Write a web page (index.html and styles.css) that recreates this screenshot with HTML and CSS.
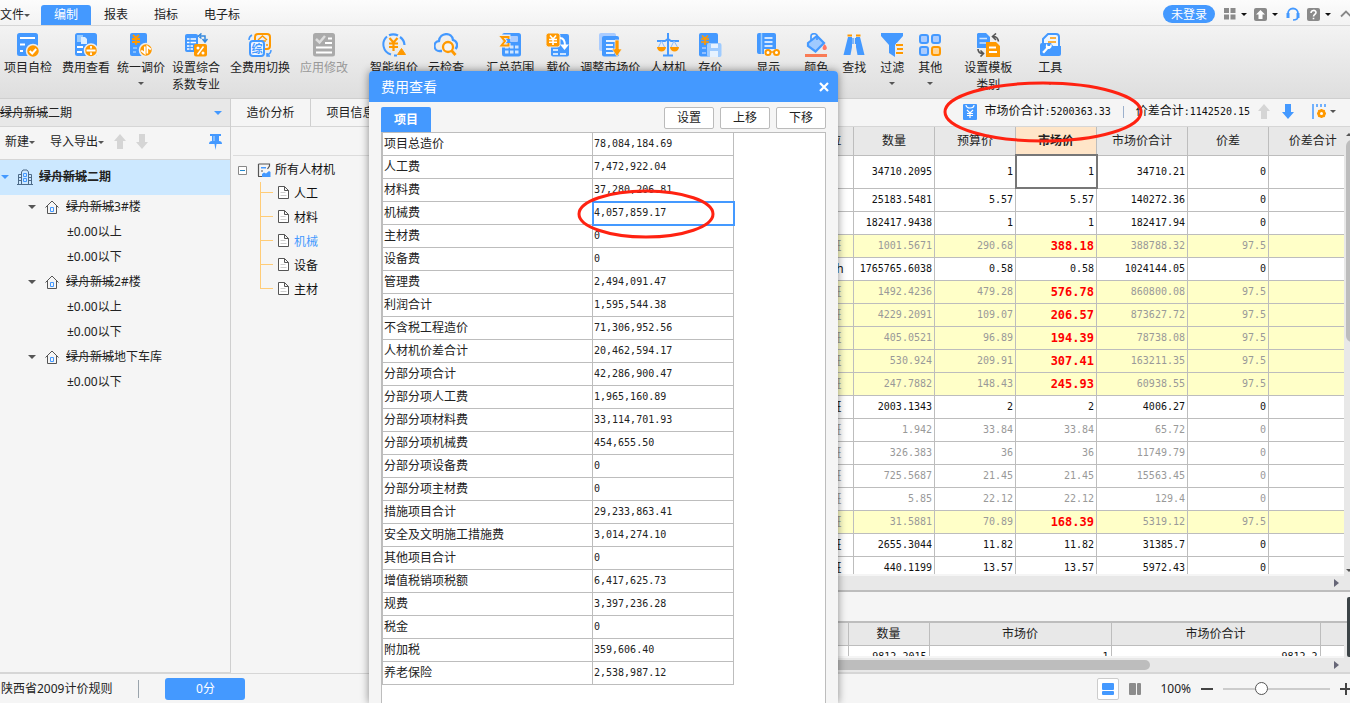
FILE: index.html
```html
<!DOCTYPE html>
<html lang="zh-CN">
<head>
<meta charset="utf-8">
<title>费用查看</title>
<link rel="stylesheet" href="styles.css">
</head>
<body>
<div class="app">
<header class="topbar">
  <nav class="menu">
    <button class="menu-item file">文件<i class="caret tiny"></i></button>
    <button class="menu-item active">编制</button>
    <button class="menu-item">报表</button>
    <button class="menu-item">指标</button>
    <button class="menu-item">电子标</button>
  </nav>
  <div class="account">
    <button class="login">未登录</button>
    <button class="tool" aria-label="布局"><svg width="12" height="12" viewBox="0 0 12 12" fill="#8a8a8a"><path d="M0 0h5v5H0zM6.500 0h5v5h-5zM0 6.500h5v5H0zM6.500 6.500h5v5h-5z"/></svg><i class="caret dark"></i></button>
    <button class="tool" aria-label="升级"><svg width="13" height="13" viewBox="0 0 13 13"><rect width="13" height="13" rx="2" fill="#8a8a8a"/><path d="M6.500 2L11 6.500H8.500V11h-4V6.500H2z" fill="#fff"/></svg><i class="caret dark"></i></button>
    <button class="tool headset" aria-label="客服"><svg width="14" height="14" viewBox="0 0 14 14" fill="none" stroke="#49f"><path d="M2 7.500v-1a5 5 0 0 1 10 0v1" stroke-width="1.800"/><path d="M2 6v5M12 6v5" stroke-width="3"/><path d="M12 9.500c0 2.500-2 3.500-5 3.500" stroke-width="1.500"/></svg></button>
    <button class="tool" aria-label="帮助"><svg width="13" height="13" viewBox="0 0 13 13"><rect width="13" height="13" rx="2" fill="#8a8a8a"/><path d="M4 5c0-3.500 5-3.200 5-.5C9 6.500 6.600 6.300 6.500 8.500M6.500 9.700v1.600" fill="none" stroke="#fff" stroke-width="1.600"/></svg><i class="caret dark"></i></button>
    <button class="tool collapse" aria-label="收起"><svg width="12" height="8" viewBox="0 0 12 8" fill="none" stroke="#888" stroke-width="1.800"><path d="M1 6.500L6 1.500l5 5"/></svg></button>
  </div>
</header>

<div class="ribbon">
  <button class="cmd m"><svg viewBox="0 0 24 24"><rect x="1" y="0" width="21" height="23" rx="2.500" fill="#49f"/><path d="M4 5h15M4 11.500h5M4 18h3" stroke="#fff" stroke-width="2"/><circle cx="17" cy="18" r="6.500" fill="#f90" stroke="#eee" stroke-width="1.500"/><path d="M13.700 18l2.500 2.500 4-4.500" fill="none" stroke="#fff" stroke-width="2"/></svg><span>项目自检</span></button>
  <button class="cmd s"><svg viewBox="0 0 24 24"><rect x="1" y="0" width="22" height="23" rx="2.500" fill="#49f"/><path d="M3 2h6v7H3z" fill="#9cf"/><path d="M7 4h4l2 2v5H7z" fill="#def"/><path d="M3 14h6M3 19h5" stroke="#fff" stroke-width="2"/><circle cx="17" cy="17.500" r="6.500" fill="#f90" stroke="#eee" stroke-width="1.500"/><path d="M12.500 17.500h9M17 13v2.500M17 19.500V22" stroke="#fff" stroke-width="1.800"/></svg><span>费用查看</span></button>
  <button class="cmd s"><svg viewBox="0 0 24 24"><rect x="1" y="0" width="17" height="23" rx="2" fill="#49f"/><path d="M4 2l3 3 3-3M3 6h8M3 9h8M7 5v7" fill="none" stroke="#f90" stroke-width="1.800"/><path d="M4 15h4M4 19h3" stroke="#9cf" stroke-width="1.500"/><circle cx="17" cy="17" r="6.500" fill="#f90" stroke="#eee" stroke-width="1.500"/><path d="M15.800 13.500v7L12.300 17.500M18.300 20.500v-7l3.500 3" fill="none" stroke="#fff" stroke-width="1.700"/></svg><span>统一调价</span><i class="caret"></i></button>
  <button class="cmd m"><svg viewBox="0 0 24 24"><rect x="1" y="1" width="13" height="18" rx="2" fill="#49f"/><path d="M3 6h9M3 9.500h9M3 13h6M3 16h6" stroke="#fff" stroke-width="1.700"/><path d="M6 5v13" stroke="#49f"/><path d="M16 3h5v5M17.500 0.500l-3 2.500 3 2.500M18.500 6l2.500 3 2.500-3" fill="none" stroke="#38d" stroke-width="1.500"/><rect x="10" y="11" width="13" height="12.500" rx="2" fill="#f90"/><path d="M19.500 13.500l-6 8" stroke="#fff" stroke-width="1.500"/><circle cx="14" cy="15" r="1.500" fill="#fff"/><circle cx="19" cy="20" r="1.500" fill="#fff"/></svg><span>设置综合<br>系数专业</span></button>
  <button class="cmd m"><svg viewBox="0 0 24 24"><rect x="7" y="1" width="15" height="15" rx="3" fill="none" stroke="#f90" stroke-width="2"/><path d="M10 7l4.500-4L19 7M11 8h7M18 12h2" fill="none" stroke="#f90" stroke-width="1.500"/><rect x="2" y="8" width="14" height="15" rx="3" fill="#f1f7ff" stroke="#49f" stroke-width="2"/><text x="9" y="20" font-size="11" font-weight="700" text-anchor="middle" fill="#49f">综</text><path d="M1 7c0-3 1-4 3-5M23 17c0 3-1 4-4 5M19 20v3h3" stroke="#49f" stroke-width="1.500" fill="none"/></svg><span>全费用切换</span></button>
  <button class="cmd l" disabled><svg viewBox="0 0 24 24"><rect x="1" y="0" width="22" height="23.500" rx="2.500" fill="#aaa"/><path d="M4 6l3.500 3.500L13 3" fill="none" stroke="#ddd" stroke-width="2.500"/><path d="M16 5.500h4M13 10h7M4 14.500h16M4 19.500h16" stroke="#fff" stroke-width="2"/></svg><span>应用修改</span></button>
  <button class="cmd m"><svg viewBox="0 0 24 24"><path d="M9 21.500A10.500 10.500 0 0 1 5 3.500" fill="none" stroke="#49f" stroke-width="2"/><path d="M7 2.200A10.500 10.500 0 0 1 16 2.500M18 4a10.500 10.500 0 0 1 4.500 8M12 22.500h3" fill="none" stroke="#49f" stroke-width="2.200"/><path d="M7.500 5l4 4.500 4-4.500M7 10.500h9M7 14h9M11.500 9v9" fill="none" stroke="#f90" stroke-width="2.200"/><path d="M19.500 15.500l4 6h-8z" fill="#f90" stroke="#f90" stroke-linejoin="round"/></svg><span>智能组价</span></button>
  <button class="cmd l"><svg viewBox="0 0 24 24"><path d="M8 18H6A5 5 0 0 1 5 8C6-1 18-1 19 7c4 1 5.500 5.500 2.500 9" fill="none" stroke="#49f" stroke-width="2.300"/><circle cx="14" cy="14" r="5" fill="#f5f5f5" stroke="#f90" stroke-width="2.300"/><path d="M17.500 17.500L21.500 22" stroke="#f90" stroke-width="2.800"/></svg><span>云检查</span></button>
  <button class="cmd n"><svg viewBox="0 0 24 24"><rect x="4" y="0" width="19" height="23.500" rx="2.500" fill="#49f"/><rect x="12" y="3" width="8" height="6" rx="1" fill="#acf"/><path d="M7 12.500h3.500v3H7zM12 12.500h3.500v3H12zM17 12.500h3.500v3H17zM7 17.500h3.500v3H7zM12 17.500h3.500v3H12zM17 17.500h3.500v3H17z" fill="#cfe5ff"/><path d="M10.500 6V3.500H3.500L7 8l-3.500 4.500h7V10" fill="none" stroke="#eee" stroke-width="4"/><path d="M10.500 6V4H3.500L7 8l-3.500 4.500h7V10" fill="none" stroke="#f90" stroke-width="2"/></svg><span>汇总范围</span></button>
  <button class="cmd m"><svg viewBox="0 0 24 24"><rect x="5" y="1" width="18" height="22.500" rx="2" fill="#49f"/><rect x="0" y="0" width="14" height="14" rx="2.500" fill="#f90" stroke="#eee"/><path d="M4 2.500L7 6l3-3.500M3 6.500h8M3 9.200h8M7 6v6" fill="none" stroke="#fff" stroke-width="1.600"/><path d="M14 5c4 0 5 3 5 8" fill="none" stroke="#fff" stroke-width="2"/><path d="M14 11.500h9L18.500 17z" fill="#fff"/><path d="M7 17h5M7 21h5M14 21h6" stroke="#cfe5ff" stroke-width="2"/></svg><span>载价</span></button>
  <button class="cmd m"><svg viewBox="0 0 24 24"><rect x="1" y="0" width="17" height="18" rx="2" fill="#acf"/><rect x="4" y="3" width="17" height="20.500" rx="2" fill="#49f"/><path d="M8 8h9M8 12h7M8 16h7M8 20h8" stroke="#e6f2ff" stroke-width="2"/><path d="M17 7h4v9h3l-5 7.500-5-7.500h3z" fill="#f90" stroke="#eee" stroke-width=".7"/></svg><span>调整市场价</span></button>
  <button class="cmd n"><svg viewBox="0 0 24 24"><path d="M12 0v22M7 22.500h10M1 8h8l3-2 3 2h8" fill="none" stroke="#49f" stroke-width="2"/><path d="M5.500 8L2 15M5.500 8L9 15M18 8l-3.500 7M18 8l4 7" stroke="#8bf" stroke-width="1"/><path d="M1 14h9a4.500 4.500 0 0 1-9 0zM14 14h9a4.500 4.500 0 0 1-9 0z" fill="#f90"/></svg><span>人材机</span></button>
  <button class="cmd x"><svg viewBox="0 0 24 24"><rect x="1" y="0" width="19" height="23.500" rx="2" fill="#49f"/><path d="M4 2.500L7 5.500l3-3M3 6h8M3 9h8M7 5v7" fill="none" stroke="#f90" stroke-width="1.700"/><path d="M4 15h4M4 20h4" stroke="#acf" stroke-width="1.500"/><rect x="9" y="10" width="14.500" height="14" rx="2" fill="#9ecbff"/><path d="M13 11h7v4h-7zM12 18h8v6h-8z" fill="#e6f2ff"/></svg><span>存价</span></button>
  <button class="cmd w"><svg viewBox="0 0 24 24"><rect x="1" y="0" width="19" height="21" rx="2" fill="#49f"/><path d="M5.500 0v21" stroke="#9cf" stroke-width="1.500"/><path d="M8.500 5h8M8.500 9h8M8.500 13h8" stroke="#fff" stroke-width="1.700"/><path d="M8 16h17v8H8z" fill="#eee"/><circle cx="12" cy="19.500" r="2.500" fill="#fff" stroke="#f90" stroke-width="2"/><circle cx="20.500" cy="19.500" r="2.500" fill="#fff" stroke="#f90" stroke-width="2"/><path d="M14 19h4" stroke="#f90" stroke-width="1.500"/></svg><span>显示</span></button>
  <button class="cmd k"><svg viewBox="0 0 24 24"><path d="M4 10l9-7 7 7-8.500 8.500L4 13z" fill="#9fcaff" stroke="#49f" stroke-width="2.200"/><path d="M7 8V3c0-3 6-3 6 0v4" fill="none" stroke="#49f" stroke-width="1.700"/><path d="M20.500 11c4 4 2 6 0 6s-3-2 0-6z" fill="#f76"/><path d="M1 22.500h22" stroke="#f97b55" stroke-width="3"/></svg><span>颜色</span></button>
  <button class="cmd k"><svg viewBox="0 0 24 24"><path d="M6 4h4v10l-1.500 8H1.500zM14 4h4l4.500 18h-7L14 14z" fill="#49f"/><path d="M11 5v6M13.500 5v6" stroke="#49f" stroke-width="1.300"/><path d="M5.500 2.500H10M14 2.500h4.500" stroke="#f90" stroke-width="2"/></svg><span>查找</span></button>
  <button class="cmd k"><svg viewBox="0 0 24 24"><path d="M1 0h22v3l-8 9v12l-6-4v-8L1 3z" fill="#49f"/><path d="M16 12h7M17 16h6M16 20h7" stroke="#eee" stroke-width="4"/><path d="M16 12h7M17 16h6M16 20h7" stroke="#f90" stroke-width="2"/></svg><span>过滤</span><i class="caret"></i></button>
  <button class="cmd l"><svg viewBox="0 0 24 24"><g fill="#acf" stroke="#49f" stroke-width="2"><rect x="2" y="2" width="8" height="8" rx="2"/><rect x="14" y="2" width="8" height="8" rx="2"/><rect x="2" y="14" width="8" height="8" rx="2"/></g><rect x="14" y="14" width="8" height="8" rx="2" fill="#ffd699" stroke="#f90" stroke-width="2"/></svg><span>其他</span><i class="caret"></i></button>
  <button class="cmd v"><svg viewBox="0 0 24 24"><path d="M2 0h8l4 4v11H1V1z" fill="#49f"/><path d="M3.500 5.500H11M3.500 10H11" stroke="#cfe5ff" stroke-width="1.500"/><path d="M10 9h10l4 4v11H10z" fill="#f90"/><path d="M13 14.500h7M13 19h8" stroke="#fff" stroke-width="2"/><path d="M17 3.500c3 0 5 1 5.500 5M20 .5l-3.500 3L20 7M2 16c0 3 2 4.500 5 4.500M4.500 17.500l3 3-3 3" fill="none" stroke="#555" stroke-width="1.600"/></svg><span>设置模板<br>类别</span></button>
  <button class="cmd"><svg viewBox="0 0 24 24"><path d="M5 12V6l5-5h8c2 0 3 1 3 3v9" fill="#eef6ff" stroke="#49f" stroke-width="2"/><path d="M12 5h6M10 9h8" stroke="#f90" stroke-width="1.700"/><path d="M2 12a2 2 0 0 1 2-2h9l2 3h8v8a2 2 0 0 1-2 2H4a2 2 0 0 1-2-2z" fill="#49f"/><path d="M9 10.500l.5 2.500h2.500l1-2.500c2 3-.5 6-3 5.500L6 20.500 4.200 19 8 15c-.5-2 0-3.500 1-4.500z" fill="#fff"/></svg><span>工具</span><i class="caret"></i></button>
</div>

<main class="main">
  <aside class="project">
    <button class="picker"><span><s>绿舟新城</s>二期</span><i class="caret blue"></i></button>
    <div class="project-tools">
      <button>新建<i class="caret tiny"></i></button>
      <button>导入导出<i class="caret tiny"></i></button>
      <button aria-label="上移"><svg width="12" height="16" viewBox="0 0 12 16" fill="#d5d5d5"><path d="M6 0l6 7H9v8H3V7H0z"/></svg></button>
      <button aria-label="下移"><svg width="12" height="16" viewBox="0 0 12 16" fill="#d5d5d5"><path d="M6 15l6-7H9V0H3v8H0z"/></svg></button>
      <button class="pin" aria-label="固定"><svg width="13" height="16" viewBox="0 0 13 16" fill="#49f"><path d="M1 0h11v2h-2v5c2 0 3 1 3 3H7.500l-1 6-1-6H0c0-2 1-3 3-3V2H1z"/><path d="M5 2v5" stroke="#bdf"/></svg></button>
    </div>
    <ul class="tree">
      <li class="root"><i class="caret blue"></i><svg width="16" height="16" viewBox="0 0 16 16" fill="none" stroke="#4c6a88"><path d="M4.500 15V3l1.500-2h4l1.500 2v12M4 5.500H1.500V15M12 5.500h2.500V15M0 15.500h16M1 8.500h3M1 11.500h3M12 8.500h3M12 11.500h3"/><path d="M6.500 4.500h3v3h-3zM6.500 9.500h3v3h-3z" stroke="#49f"/></svg><b><s>绿舟新城</s>二期</b></li>
      <li class="node"><i class="caret big"></i><svg class="home" viewBox="0 0 14 14"><path d="M.5 7.500L7 1l6.500 6.500M2.500 6v7.500h9V6"/><path d="M5.500 7.500h3v4h-3z"/></svg><span><s>绿舟新城</s>3#楼</span></li>
      <li class="leaf">±0.00以上</li>
      <li class="leaf">±0.00以下</li>
      <li class="node"><i class="caret big"></i><svg class="home" viewBox="0 0 14 14"><path d="M.5 7.500L7 1l6.500 6.500M2.500 6v7.500h9V6"/><path d="M5.500 7.500h3v4h-3z"/></svg><span><s>绿舟新城</s>2#楼</span></li>
      <li class="leaf">±0.00以上</li>
      <li class="leaf">±0.00以下</li>
      <li class="node"><i class="caret big"></i><svg class="home" viewBox="0 0 14 14"><path d="M.5 7.500L7 1l6.500 6.500M2.500 6v7.500h9V6"/><path d="M5.500 7.500h3v4h-3z"/></svg><span><s>绿舟新城</s>地下车库</span></li>
      <li class="leaf">±0.00以下</li>
    </ul>
  </aside>

  <section class="work">
    <div class="workbar">
      <button class="view">造价分析</button>
      <button class="view">项目信息</button>
      <div class="totals">
        <svg width="14" height="16" viewBox="0 0 14 16"><rect width="14" height="16" rx="1" fill="#49f"/><path d="M3 1c0 4 8 4 8 0M4 6l3 3 3-3M4 9.500h6M4 11.500h6M7 9v5" fill="none" stroke="#fff" stroke-width="1.200"/></svg>
        <span class="sum">市场价合计<span class="num">:5200363.33</span></span>
        <i class="sep"></i>
        <span>价差合计<span class="num">:1142520.15</span></span>
        <button aria-label="上一条"><svg width="12" height="16" viewBox="0 0 12 16" fill="#d5d5d5"><path d="M6 0l6 7H9v8H3V7H0z"/></svg></button>
        <button class="down" aria-label="下一条"><svg width="12" height="16" viewBox="0 0 12 16" fill="#49f"><path d="M6 15l6-7H9V0H3v8H0z"/></svg></button>
        <button class="cols" aria-label="列设置"><svg width="15" height="15" viewBox="0 0 15 15"><path d="M1 0v15M5 0v3M9 0v3M13 0v3" stroke="#49f" stroke-width="1.500"/><circle cx="9.500" cy="9.500" r="3" fill="none" stroke="#f90" stroke-width="2.500"/><path d="M9.500 5v9M5 9.500h9M6.300 6.300l6.400 6.400M12.700 6.300l-6.400 6.400" stroke="#f90" stroke-width="1.300"/><circle cx="9.500" cy="9.500" r="1.500" fill="#fff"/></svg><i class="caret"></i></button>
      </div>
    </div>
    <div class="split">
      <div class="kinds">
        <div class="all"><svg class="minus" width="9" height="9" viewBox="0 0 9 9"><path d="M.5.5h8v8h-8z" fill="#fff" stroke="#888"/><path d="M2 4.500h5" stroke="#28c"/></svg><svg width="14" height="14" viewBox="0 0 14 14"><path d="M1.500 1h11v2l-2 3M1.500 1v12M1 13.500h4" fill="none" stroke="#555" stroke-width="1.200"/><path d="M4 4h5v1.500H4z" fill="#49f"/><path d="M4 8h2" stroke="#555"/><path d="M5 14v-3l2-1.500 2 1 3-2.500 1.500 1V14z" fill="#49f"/></svg><span>所有人材机</span></div>
        <ul>
          <li><svg class="doc" viewBox="0 0 11 13"><path d="M.5.5h6l4 4v8H.5zM6.500.5v4h4"/><path d="M2.500 6.500h5M2.500 9.500h6"/></svg>人工</li>
          <li><svg class="doc" viewBox="0 0 11 13"><path d="M.5.5h6l4 4v8H.5zM6.500.5v4h4"/><path d="M2.500 6.500h5M2.500 9.500h6"/></svg>材料</li>
          <li class="on"><svg class="doc" viewBox="0 0 11 13"><path d="M.5.5h6l4 4v8H.5zM6.500.5v4h4"/><path d="M2.500 6.500h5M2.500 9.500h6"/></svg>机械</li>
          <li><svg class="doc" viewBox="0 0 11 13"><path d="M.5.5h6l4 4v8H.5zM6.500.5v4h4"/><path d="M2.500 6.500h5M2.500 9.500h6"/></svg>设备</li>
          <li><svg class="doc" viewBox="0 0 11 13"><path d="M.5.5h6l4 4v8H.5zM6.500.5v4h4"/><path d="M2.500 6.500h5M2.500 9.500h6"/></svg>主材</li>
        </ul>
      </div>
      <div class="grids">
        <div class="pane upper">
          <div class="view-port">
            <table class="data">
              <colgroup><col><col class="c-unit"><col class="c-n"><col class="c-n"><col class="c-n"><col class="c-t"><col class="c-n"><col class="c-e"></colgroup>
              <thead><tr><th></th><th>单位</th><th>数量</th><th>预算价</th><th class="hot">市场价</th><th>市场价合计</th><th>价差</th><th class="last">价差合计</th></tr></thead>
              <tbody>
                <tr class="tall"><td></td><td></td><td>34710.2095</td><td>1</td><td class="cursor">1</td><td>34710.21</td><td>0</td><td></td></tr>
                <tr><td></td><td></td><td>25183.5481</td><td>5.57</td><td>5.57</td><td>140272.36</td><td>0</td><td></td></tr>
                <tr><td></td><td></td><td>182417.9438</td><td>1</td><td>1</td><td>182417.94</td><td>0</td><td></td></tr>
                <tr class="diff"><td></td><td>台班</td><td>1001.5671</td><td>290.68</td><td>388.18</td><td>388788.32</td><td>97.5</td><td></td></tr>
                <tr><td></td><td>kW·h</td><td>1765765.6038</td><td>0.58</td><td>0.58</td><td>1024144.05</td><td>0</td><td></td></tr>
                <tr class="diff"><td></td><td>台班</td><td>1492.4236</td><td>479.28</td><td>576.78</td><td>860800.08</td><td>97.5</td><td></td></tr>
                <tr class="diff"><td></td><td>台班</td><td>4229.2091</td><td>109.07</td><td>206.57</td><td>873627.72</td><td>97.5</td><td></td></tr>
                <tr class="diff"><td></td><td>台班</td><td>405.0521</td><td>96.89</td><td>194.39</td><td>78738.08</td><td>97.5</td><td></td></tr>
                <tr class="diff"><td></td><td>台班</td><td>530.924</td><td>209.91</td><td>307.41</td><td>163211.35</td><td>97.5</td><td></td></tr>
                <tr class="diff"><td></td><td>台班</td><td>247.7882</td><td>148.43</td><td>245.93</td><td>60938.55</td><td>97.5</td><td></td></tr>
                <tr><td></td><td>台班</td><td>2003.1343</td><td>2</td><td>2</td><td>4006.27</td><td>0</td><td></td></tr>
                <tr class="dim"><td></td><td>台班</td><td>1.942</td><td>33.84</td><td>33.84</td><td>65.72</td><td>0</td><td></td></tr>
                <tr class="dim"><td></td><td>台班</td><td>326.383</td><td>36</td><td>36</td><td>11749.79</td><td>0</td><td></td></tr>
                <tr class="dim"><td></td><td>台班</td><td>725.5687</td><td>21.45</td><td>21.45</td><td>15563.45</td><td>0</td><td></td></tr>
                <tr class="dim"><td></td><td>台班</td><td>5.85</td><td>22.12</td><td>22.12</td><td>129.4</td><td>0</td><td></td></tr>
                <tr class="diff"><td></td><td>台班</td><td>31.5881</td><td>70.89</td><td>168.39</td><td>5319.12</td><td>97.5</td><td></td></tr>
                <tr><td></td><td>台班</td><td>2655.3044</td><td>11.82</td><td>11.82</td><td>31385.7</td><td>0</td><td></td></tr>
                <tr><td></td><td>台班</td><td>440.1199</td><td>13.57</td><td>13.57</td><td>5972.43</td><td>0</td><td></td></tr>
              </tbody>
            </table>
          </div>
          <div class="vbar"><i class="arrow-up"></i><i class="vthumb"></i><i class="caret"></i></div>
          <div class="hbar"><i class="arrow-right"></i></div>
        </div>
        <div class="spacer"></div>
        <div class="pane lower">
          <div class="view-port">
            <table class="data">
              <colgroup><col><col class="c-n"><col class="c-m"><col class="c-s"><col class="c-r"></colgroup>
              <thead><tr><th></th><th>数量</th><th>市场价</th><th>市场价合计</th><th class="last"></th></tr></thead>
              <tbody><tr><td></td><td>9812.2015</td><td>1</td><td>9812.2</td><td></td></tr></tbody>
            </table>
          </div>
          <div class="vbar"></div>
          <div class="hbar"><i class="hthumb"></i><i class="arrow-right"></i></div>
          <i class="handle"></i>
        </div>
      </div>
    </div>
  </section>
</main>

<footer class="status">
  <span>陕西省2009计价规则</span>
  <i class="rule"></i>
  <button class="score">0分</button>
  <div class="zoom">
    <button class="mode on" aria-label="上下布局"><svg width="12" height="12" viewBox="0 0 12 12" fill="#49f"><rect width="12" height="7" rx="1"/><rect y="8" width="12" height="4" rx="1"/></svg></button>
    <button class="mode" aria-label="左右布局"><svg width="12" height="12" viewBox="0 0 12 12" fill="#8c8c8c"><rect width="7" height="12" rx="1"/><rect x="8" width="4" height="12" rx="1"/></svg></button>
    <label for="zoom">100%</label>
    <button class="step" aria-label="缩小"><svg width="12" height="12" viewBox="0 0 12 12"><path d="M0 6h12" stroke="#444" stroke-width="2"/></svg></button>
    <input id="zoom" type="range" min="0" max="100" value="34">
    <button class="step" aria-label="放大"><svg width="12" height="12" viewBox="0 0 12 12"><path d="M0 6h12M6 0v12" stroke="#444" stroke-width="2"/></svg></button>
  </div>
</footer>

<div class="dialog" role="dialog" aria-labelledby="dlg">
  <div class="dialog-head"><h1 id="dlg">费用查看</h1><button aria-label="关闭"><svg width="10" height="10" viewBox="0 0 10 10"><path d="M1 1l8 8M9 1L1 9" stroke="#fff" stroke-width="2.200"/></svg></button></div>
  <div class="dialog-tools"><button class="tab">项目</button><button class="btn first">设置</button><button class="btn">上移</button><button class="btn">下移</button></div>
  <div class="dialog-body">
    <table class="fees">
      <tbody>
        <tr><td>项目总造价</td><td>78,084,184.69</td></tr>
        <tr><td>人工费</td><td>7,472,922.04</td></tr>
        <tr><td>材料费</td><td>37,280,206.81</td></tr>
        <tr><td>机械费</td><td class="sel">4,057,859.17</td></tr>
        <tr><td>主材费</td><td>0</td></tr>
        <tr><td>设备费</td><td>0</td></tr>
        <tr><td>管理费</td><td>2,494,091.47</td></tr>
        <tr><td>利润合计</td><td>1,595,544.38</td></tr>
        <tr><td>不含税工程造价</td><td>71,306,952.56</td></tr>
        <tr><td>人材机价差合计</td><td>20,462,594.17</td></tr>
        <tr><td>分部分项合计</td><td>42,286,900.47</td></tr>
        <tr><td>分部分项人工费</td><td>1,965,160.89</td></tr>
        <tr><td>分部分项材料费</td><td>33,114,701.93</td></tr>
        <tr><td>分部分项机械费</td><td>454,655.50</td></tr>
        <tr><td>分部分项设备费</td><td>0</td></tr>
        <tr><td>分部分项主材费</td><td>0</td></tr>
        <tr><td>措施项目合计</td><td>29,233,863.41</td></tr>
        <tr><td>安全及文明施工措施费</td><td>3,014,274.10</td></tr>
        <tr><td>其他项目合计</td><td>0</td></tr>
        <tr><td>增值税销项税额</td><td>6,417,625.73</td></tr>
        <tr><td>规费</td><td>3,397,236.28</td></tr>
        <tr><td>税金</td><td>0</td></tr>
        <tr><td>附加税</td><td>359,606.40</td></tr>
        <tr><td>养老保险</td><td>2,538,987.12</td></tr>
      </tbody>
    </table>
  </div>
</div>
<svg class="ring ring-fee" viewBox="0 0 138 50"><ellipse cx="69" cy="25" rx="67" ry="23"/></svg>
<svg class="ring ring-total" viewBox="0 0 202 62"><ellipse cx="101" cy="31" rx="98" ry="29"/></svg>
</div>
</body>
</html>
```

FILE: styles.css
```css
* { box-sizing: border-box; }
body { margin: 0; font: 12px/16px "Noto Sans", "Noto Sans CJK SC", sans-serif; color: #222; background: #f5f5f5; }
button { font: inherit; color: inherit; background: none; border: 0; padding: 0; margin: 0; }
ul { list-style: none; margin: 0; padding: 0; }
svg { display: block; flex: none; }
table { border-collapse: collapse; table-layout: fixed; }

.app { position: relative; display: flex; flex-direction: column; height: 100vh; overflow: hidden; }

.caret { display: inline-block; flex: none; border: 3px solid transparent; border-top: 3px solid #555; border-bottom: 0; }
.caret.tiny { vertical-align: middle; }
.caret.dark { border-top-color: #111; }
.caret.blue { border-width: 4px; border-bottom: 0; border-top-color: #49f; }
.caret.big { border-width: 4px; border-bottom: 0; }

.topbar { display: flex; justify-content: space-between; height: 26px; border-bottom: 1px solid #d6d6d6; background: linear-gradient(#fcfcfc, #f3f3f3); flex: none; }
.menu { display: flex; align-items: flex-end; }
.menu-item { width: 50px; height: 20px; }
.menu-item:last-child { width: 62px; }
.menu-item.file { width: 41px; text-align: left; white-space: nowrap; }
.menu-item.active { background: #49f; color: #fff; border-radius: 3px 3px 0 0; }
.account { display: flex; align-items: center; height: 28px; gap: 7px; }
.login { width: 52px; height: 18px; line-height: 17px; border-radius: 9px; background: #49f; color: #fff; margin-right: 2px; }
.tool { display: flex; align-items: center; gap: 5px; }
.headset, .collapse { margin-left: 1px; }
.collapse { width: 10px; margin-left: 2px; }

.ribbon { display: flex; height: 73px; padding: 7px 0 0 4px; border-bottom: 1px solid #cfcfcf; background: linear-gradient(#f3f3f3, #dedede); flex: none; }
.cmd { display: flex; flex-direction: column; align-items: center; gap: 2px; line-height: 17px; height: 60px; white-space: nowrap; flex: none; }
.cmd svg { width: 24px; height: 24px; }
.cmd .caret { margin-top: 4px; }
.cmd:disabled { color: #999; }
.s { margin-right: 7px; }
.m { margin-right: 10px; }
.n { margin-right: 12px; }
.k { margin-right: 14px; }
.l { margin-right: 22px; }
.w { margin-right: 24px; }
.v { margin-right: 26px; }
.x { margin-right: 34px; }

.main { display: flex; flex: 1; min-height: 0; }
.project { width: 231px; border-right: 1px solid #cfcfcf; border-bottom: 1px solid #d6d6d6; flex: none; }
.picker { display: flex; align-items: center; justify-content: space-between; width: 100%; height: 28px; padding: 0 8px 0 0; background: #e8e8e8; border-bottom: 1px solid #d6d6d6; }
.project-tools { display: flex; align-items: center; gap: 10px; height: 33px; padding: 0 8px 2px 5px; border-bottom: 1px solid #d6d6d6; }
.project-tools button:nth-child(2) { margin-left: 5px; }
.project-tools .pin { margin-left: auto; }
.tree li { display: flex; align-items: center; height: 25px; }
.tree .root { height: 35px; padding: 0 0 2px 1px; margin-bottom: -1px; background: #cce8ff; }
.root svg { margin: 0 6px 0 8px; }
.tree .node { padding-left: 28px; }
.tree .leaf { padding-left: 67px; }
.home { width: 14px; height: 14px; margin: 0 7px 0 9px; fill: none; stroke: #555; }
.home path + path { stroke: #49f; }

.work { display: flex; flex-direction: column; flex: 1; min-width: 0; }
.workbar { display: flex; height: 28px; border-bottom: 1px solid #d6d6d6; flex: none; }
.view { width: 80px; border-right: 1px solid #cfcfcf; }
.totals { display: flex; align-items: center; margin-left: auto; color: #111; padding: 0 14px 2px 0; }
.sum { margin-left: 8px; }
.sep { width: 1px; height: 12px; margin: 0 12px; background: #9bb0cc; }
.num { font: 10px/16px "DejaVu Sans Mono", monospace; }
.totals button { margin-left: 8px; }
.totals .down { margin-left: 12px; }
.totals .cols { display: flex; align-items: center; gap: 3px; margin-left: 18px; }

.split { display: flex; flex: 1; min-height: 0; }
.kinds { flex: 1; min-width: 138px; margin: 28px 0 0 2px; border-top: 1px solid #dcdcdc; color: #111; }
.all { display: flex; align-items: center; height: 26px; padding: 2px 0 0 5px; }
.minus { margin-right: 10px; }
.all span { margin-left: 4px; }
.kinds ul { margin-left: 27px; border-left: 1px solid #fc7; height: 107px; }
.kinds li { display: flex; align-items: center; height: 24px; }
.kinds li::before { content: ""; width: 12px; margin-bottom: 4px; border-top: 1px solid #fc7; }
.kinds .on { color: #49f; }
.doc { width: 11px; height: 13px; margin: 0 5px 4px 5px; fill: #fff; stroke: #555; }
.doc path + path { stroke: #ccc; }

.grids { display: flex; flex-direction: column; width: 545px; flex: none; }
.pane { display: grid; grid-template-columns: 1fr 6px; }
.upper { flex: 1; min-height: 0; grid-template-rows: 1fr 14px; border-bottom: 2px solid #bdbdbd; }
.view-port { overflow: hidden; background: #fff; border-bottom: 2px solid #f5f5f5; }
.data { width: 100%; }
.data th { height: 28px; padding: 0; background: #e8e8e8; border: 1px solid #bdbdbd; border-top: 0; font-weight: 400; }
.data th.last { padding-left: 12px; }
.data th.last, .data td:last-child { border-right: 0; }
.data td { height: 23px; padding: 0 2px; border: 1px solid #bdbdbd; text-align: right; font: 10px/16px "DejaVu Sans Mono", monospace; color: #111; background: #fff; }
.data .hot { background: #ffe5c8; border-bottom: 2px solid #49f; font-weight: 700; }
.data .tall td { height: 33px; }
.upper td:nth-child(2) { text-align: center; font: 12px/16px "Noto Sans", "Noto Sans CJK SC", sans-serif; padding: 0; }
.data .cursor { outline: 2px solid #777; outline-offset: -1px; }
.data .dim td, .data .diff td { color: #999; }
.data .diff td { background: #ffffc8; }
.data .diff td:nth-child(5) { color: #f00; font-weight: 700; font-size: 12px; }
.c-unit { width: 48px; }
.c-n { width: 81px; }
.c-t { width: 91px; }
.c-e { width: 76px; }
.c-m { width: 182px; }
.c-s { width: 209px; }
.c-r { width: 24px; }
.vbar { display: flex; flex-direction: column; gap: 4px; padding: 6px 0 4px 2px; background: #e8e8e8; overflow: hidden; }
.vthumb { flex: 0 0 46%; width: 12px; border-radius: 6px; background: #bdbdbd; }
.vbar .caret { margin-top: auto; }
.arrow-up { width: 0; border: 3px solid transparent; border-bottom-color: #555; border-top: 0; }
.hbar { grid-column: 1 / -1; display: flex; align-items: center; justify-content: flex-end; padding-right: 11px; background: #e8e8e8; }
.arrow-right { border: 4px solid transparent; border-left: 5px solid #667; border-right: 0; }
.hthumb { width: 345px; height: 10px; margin-right: auto; border-radius: 5px; background: #bdbdbd; }
.spacer { height: 29px; flex: none; }
.lower { position: relative; grid-template-rows: 35px 14px; border-top: 2px solid #bdbdbd; border-bottom: 1px solid #d6d6d6; }
.lower .data th { height: 22px; }
.handle { position: absolute; right: 0; top: -26px; width: 3px; height: 60px; border-radius: 2px 0 0 2px; background: #3c4447; }

.status { display: flex; align-items: center; height: 30px; padding-left: 1px; border-top: 1px solid #d6d6d6; flex: none; }
.rule { width: 1px; height: 18px; margin: 0 26px; background: #9aa4ac; }
.score { width: 80px; height: 22px; border-radius: 3px; background: #49f; color: #fff; }
.zoom { display: flex; align-items: center; margin-left: auto; }
.mode { display: grid; place-items: center; width: 22px; height: 22px; border-radius: 2px; }
.mode.on { border: 1px solid #ccc; background: #fff; margin-right: 5px; }
.zoom label { margin: 0 10px 0 14px; }
.step { width: 12px; }
.zoom .step:last-child { margin-left: 10px; margin-right: -2px; }
#zoom { appearance: none; width: 107px; height: 14px; margin: 0 0 0 10px; background: linear-gradient(#ccc, #ccc) center / 100% 2px no-repeat; }
#zoom::-webkit-slider-thumb { appearance: none; width: 13px; height: 13px; border: 1px solid #555; border-radius: 50%; background: #fff; }

.dialog { position: absolute; left: 369px; top: 71px; bottom: 0; width: 469px; display: flex; flex-direction: column; background: #f5f5f5; border-radius: 4px 4px 0 0; box-shadow: 0 0 8px rgba(0, 0, 0, .45); }
.dialog-head { display: flex; align-items: center; justify-content: space-between; height: 31px; padding: 0 9px 0 12px; background: #49f; color: #fff; border-radius: 4px 4px 0 0; flex: none; }
.dialog-head h1 { margin: 0; font-size: 14px; font-weight: 400; }
.dialog-tools { display: flex; gap: 6px; padding: 5px 12px 0; height: 30px; flex: none; }
.tab { width: 50px; height: 25px; background: #49f; color: #fff; font-weight: 700; border-radius: 2px 2px 0 0; }
.btn { width: 50px; height: 22px; line-height: 20px; background: #fff; border: 1px solid #bbb; border-radius: 2px; }
.btn.first { margin-left: auto; }
.dialog-body { flex: 1; min-height: 0; overflow: hidden; margin: 0 12px; border: 1px solid #bdbdbd; border-bottom: 0; background: #fff; }
.fees { width: 352px; margin-top: -1px; }
.fees td { height: 23px; padding: 0 1px; border: 1px solid #bdbdbd; line-height: 16px; }
.fees td:first-child { width: 210px; }
.fees td:last-child { font: 10px/16px "DejaVu Sans Mono", monospace; }
.fees .sel { outline: 2px solid #49f; outline-offset: -1px; }

.ring { position: absolute; fill: none; stroke: #f21; stroke-width: 3; pointer-events: none; }
.ring-fee { left: 577px; top: 189px; width: 138px; height: 50px; }
.ring-total { left: 942px; top: 81px; width: 202px; height: 62px; }
```
